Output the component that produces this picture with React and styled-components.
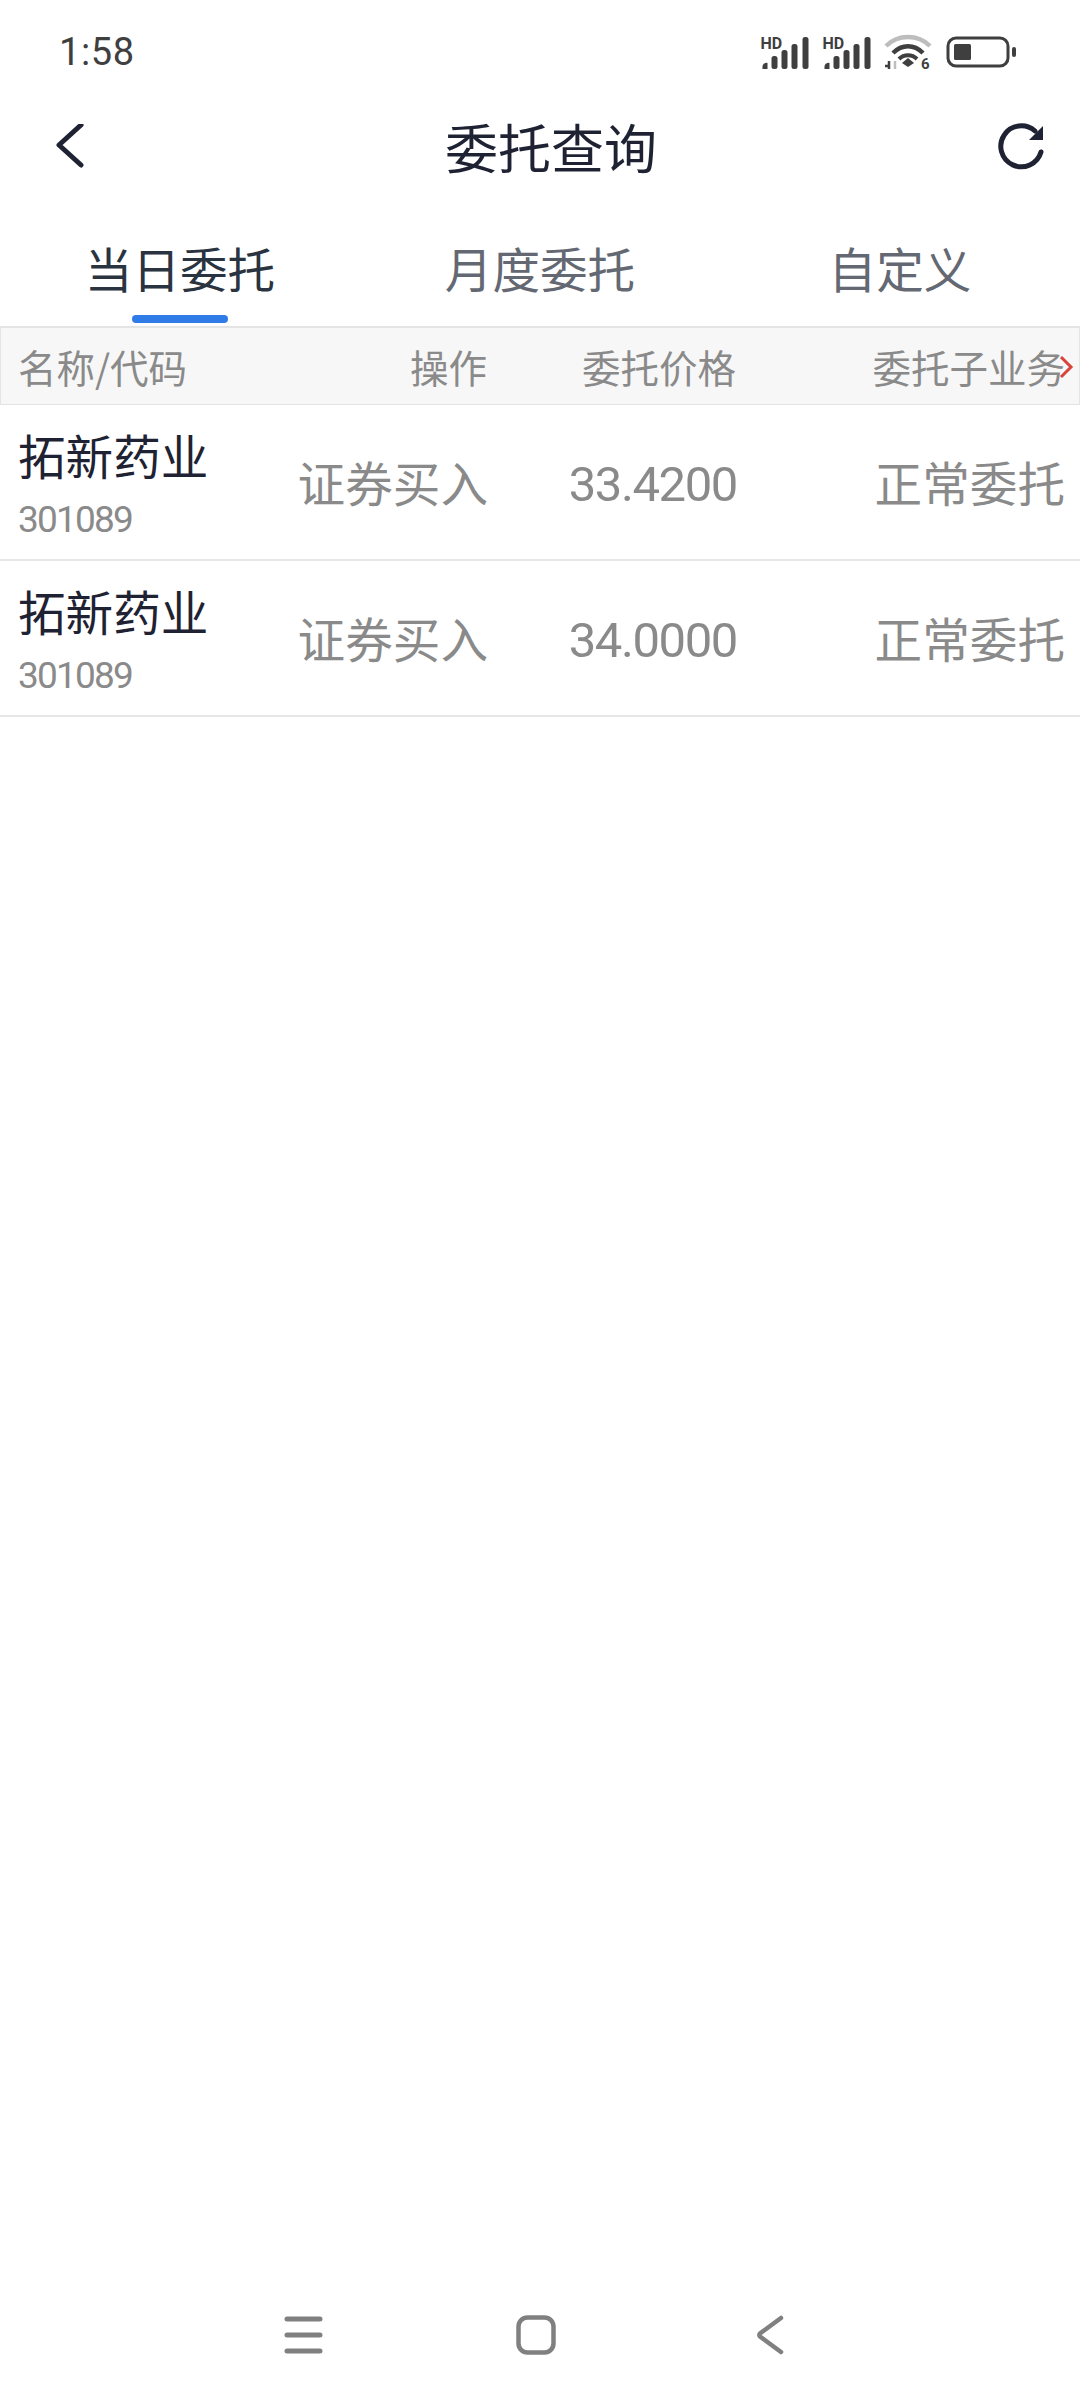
import React from 'react';
import styled, { createGlobalStyle } from 'styled-components';

const GlobalStyle = createGlobalStyle`
    html, body {
        margin: 0;
        padding: 0;
        background: #fff;
    }
    body {
        font-family: "Noto Sans CJK SC", "Noto Sans", sans-serif;
    }
`;

const Page = styled.div`
    width: 1080px;
    height: 2400px;
    display: flex;
    flex-direction: column;
    background: #fff;
    overflow: hidden;
`;

const StatusBar = styled.div`
    height: 104px;
    flex: none;
    display: flex;
    align-items: center;
    justify-content: space-between;
    padding: 0 64px 0 59px;
    box-sizing: border-box;
`;

const Time = styled.span`
    font-family: Roboto, sans-serif;
    font-size: 38px;
    letter-spacing: 0.6px;
    color: #3f3f3f;
`;

const StatusIcons = styled.div`
    display: flex;
    align-items: center;
    gap: 11px;
`;

const BatteryIcon = styled.svg`
    margin-left: 3px;
`;

const NavBar = styled.div`
    height: 88px;
    flex: none;
    display: flex;
    align-items: center;
    justify-content: space-between;
    padding: 0 32px 0 54px;
    box-sizing: border-box;
`;

const Title = styled.h1`
    margin: 0;
    padding: 0 0 4px 18px;
    font-size: 53px;
    font-weight: 400;
    line-height: 84px;
    color: #1e2232;
`;

const Tabs = styled.div`
    height: 134px;
    flex: none;
    display: grid;
    grid-template-columns: repeat(3, 1fr);
`;

const Tab = styled.div`
    position: relative;
    height: 134px;
    box-sizing: border-box;
    padding-top: 43px;
    text-align: center;
    font-size: 47.6px;
    line-height: 66px;
    color: ${({ active }) => active ? '#2a3340' : '#636872'};
`;

const Indicator = styled.div`
    position: absolute;
    left: 132px;
    bottom: 3px;
    width: 96px;
    height: 8px;
    border-radius: 4px;
    background: #2f7be8;
`;

const TableHead = styled.div`
    position: relative;
    height: 79px;
    flex: none;
    display: grid;
    grid-template-columns: 200px 269px 249px 1fr;
    align-items: center;
    padding: 0 14px 0 17px;
    box-sizing: border-box;
    background: #f7f7f7;
    border: 1px solid #e4e4e4;
    border-top-width: 2px;
    font-size: 38.5px;
    line-height: 74px;
    color: #8a8a8a;
`;

const HeadCell = styled.div`
    text-align: ${({ left }) => left ? 'left' : 'right'};
    white-space: nowrap;
`;

const MoreArrow = styled.svg`
    position: absolute;
    right: 5px;
    top: 27px;
`;

const Row = styled.div`
    height: 156px;
    flex: none;
    display: grid;
    grid-template-columns: 200px 270px 249px 1fr;
    align-items: center;
    padding: 0 15px 0 18px;
    box-sizing: border-box;
    border-bottom: 2px solid #e6e6e6;
`;

const NameCell = styled.div`
    display: flex;
    flex-direction: column;
    gap: 8px;
`;

const StockName = styled.span`
    font-size: 47.6px;
    line-height: 68px;
    white-space: nowrap;
    color: #1e2232;
`;

const StockCode = styled.span`
    font-family: Roboto, sans-serif;
    font-size: 37px;
    line-height: 46px;
    letter-spacing: -1.8px;
    color: #8a8a8a;
`;

const Cell = styled.div`
    text-align: right;
    font-size: 47.6px;
    line-height: 66px;
    color: #8a8a8a;
`;

const Price = styled(Cell)`
    font-family: Roboto, sans-serif;
    font-size: 49px;
    letter-spacing: -1.4px;
    padding-top: 5px;
`;

const BottomNav = styled.div`
    margin-top: auto;
    height: 85px;
    flex: none;
    display: grid;
    grid-template-columns: 232px 240px auto;
    align-content: start;
    padding-left: 284px;
    box-sizing: border-box;
`;

function Signal() {
    return (
        <svg width="51" height="34" viewBox="0 0 50 34">
            <text x="0" y="14" fontFamily="Roboto, sans-serif" fontWeight="700" fontSize="16" fill="#3f3f3f">HD</text>
            <path d="M2 34v-3a4 4 0 0 1 5-3v6z" fill="#3f3f3f" />
            <rect x="11" y="21" width="6" height="13" rx="2.5" fill="#3f3f3f" />
            <rect x="21" y="15" width="6" height="19" rx="2.5" fill="#3f3f3f" />
            <rect x="31" y="9" width="6" height="25" rx="2.5" fill="#3f3f3f" />
            <rect x="42" y="2" width="6" height="32" rx="2.5" fill="#3f3f3f" />
        </svg>
    );
}

function Wifi() {
    return (
        <svg width="48" height="42" viewBox="0 -2 48 42">
            <path d="M2 13C14 1 34 1 46 13" fill="none" stroke="#bdbdbd" strokeWidth="4.5" />
            <path d="M9 20C18 11 30 11 39 20" fill="none" stroke="#3f3f3f" strokeWidth="4.5" />
            <path d="M15 26C20 21 28 21 33 26" fill="none" stroke="#3f3f3f" strokeWidth="4" />
            <path d="M24 25l6 5-6 4-6-4z" fill="#3f3f3f" />
            <path d="M5 28v8M1 33h4" stroke="#3f3f3f" strokeWidth="2.5" fill="none" />
            <path d="M11 28v8" stroke="#bdbdbd" strokeWidth="2.5" fill="none" />
            <text x="37" y="36" fontFamily="Roboto, sans-serif" fontWeight="700" fontSize="15" fill="#3f3f3f">6</text>
        </svg>
    );
}

function Battery() {
    return (
        <BatteryIcon width="70" height="32" viewBox="0 0 70 32">
            <rect x="2" y="2" width="60" height="28" rx="8" fill="none" stroke="#3f3f3f" strokeWidth="3" />
            <rect x="8" y="8" width="17" height="16" rx="1.5" fill="#3f3f3f" />
            <rect x="66" y="11" width="4" height="10" rx="2" fill="#3f3f3f" />
        </BatteryIcon>
    );
}

function BackIcon() {
    return (
        <svg width="34" height="48" viewBox="0 0 34 48">
            <path d="M27 1L5 21l22 20" fill="none" stroke="#1e2232" strokeWidth="5" strokeLinecap="round" strokeLinejoin="round" />
        </svg>
    );
}

function RefreshIcon() {
    return (
        <svg width="52" height="52" viewBox="0 0 52 52">
            <path d="M45 30A20.500 20.500 0 1 1 39 9" fill="none" stroke="#1e2232" strokeWidth="5" strokeLinecap="round" />
            <path d="M47 4v14H33z" fill="#1e2232" />
        </svg>
    );
}

function MenuKey() {
    return (
        <svg width="40" height="40" viewBox="0 0 40 40">
            <path d="M3 4h33M3 20h33M3 36h33" stroke="#808080" strokeWidth="5" strokeLinecap="round" fill="none" />
        </svg>
    );
}

function HomeKey() {
    return (
        <svg width="40" height="40" viewBox="0 0 40 40">
            <rect x="2.500" y="2.500" width="35" height="35" rx="9" fill="none" stroke="#808080" strokeWidth="4.500" />
        </svg>
    );
}

function BackKey() {
    return (
        <svg width="28" height="40" viewBox="0 0 28 40">
            <path d="M25 3L4 18.500a2 2 0 0 0 0 3L25 37" fill="none" stroke="#808080" strokeWidth="4.500" strokeLinecap="round" />
        </svg>
    );
}

const orders = [
    { name: '拓新药业', code: '301089', action: '证券买入', price: '33.4200', status: '正常委托' },
    { name: '拓新药业', code: '301089', action: '证券买入', price: '34.0000', status: '正常委托' },
];

export default function App() {
    return (
        <Page>
            <GlobalStyle />
            <StatusBar>
                <Time>1:58</Time>
                <StatusIcons>
                    <Signal />
                    <Signal />
                    <Wifi />
                    <Battery />
                </StatusIcons>
            </StatusBar>
            <NavBar>
                <BackIcon />
                <Title>委托查询</Title>
                <RefreshIcon />
            </NavBar>
            <Tabs>
                <Tab active>当日委托<Indicator /></Tab>
                <Tab>月度委托</Tab>
                <Tab>自定义</Tab>
            </Tabs>
            <TableHead>
                <HeadCell left>名称/代码</HeadCell>
                <HeadCell>操作</HeadCell>
                <HeadCell>委托价格</HeadCell>
                <HeadCell>委托子业务</HeadCell>
                <MoreArrow width="16" height="24" viewBox="0 0 16 24">
                    <path d="M3 2l10 10-10 10" fill="none" stroke="#d9433a" strokeWidth="3" />
                </MoreArrow>
            </TableHead>
            {orders.map((order, i) => (
                <Row key={i}>
                    <NameCell>
                        <StockName>{order.name}</StockName>
                        <StockCode>{order.code}</StockCode>
                    </NameCell>
                    <Cell>{order.action}</Cell>
                    <Price>{order.price}</Price>
                    <Cell>{order.status}</Cell>
                </Row>
            ))}
            <BottomNav>
                <MenuKey />
                <HomeKey />
                <BackKey />
            </BottomNav>
        </Page>
    );
}
